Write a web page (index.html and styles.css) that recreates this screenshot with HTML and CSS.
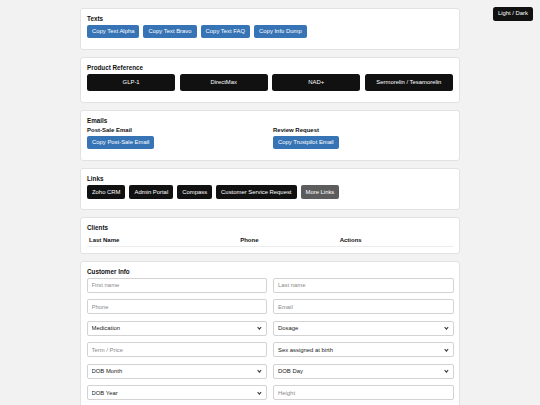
FILE: index.html
```html
<!DOCTYPE html>
<html lang="en">
<head>
<meta charset="utf-8">
<title>Dashboard</title>
<link rel="stylesheet" href="styles.css">
</head>
<body>
<button class="theme-toggle">Light / Dark</button>
<main class="container">
  <section class="card">
    <h2 class="card-title">Texts</h2>
    <div class="btn-row">
      <button class="btn btn-blue">Copy Text Alpha</button>
      <button class="btn btn-blue">Copy Text Bravo</button>
      <button class="btn btn-blue">Copy Text FAQ</button>
      <button class="btn btn-blue">Copy Info Dump</button>
    </div>
  </section>

  <section class="card">
    <h2 class="card-title">Product Reference</h2>
    <div class="product-grid">
      <button class="btn btn-dark btn-product">GLP-1</button>
      <button class="btn btn-dark btn-product">DirectMax</button>
      <button class="btn btn-dark btn-product">NAD+</button>
      <button class="btn btn-dark btn-product">Sermorelin / Tesamorelin</button>
    </div>
  </section>

  <section class="card">
    <h2 class="card-title">Emails</h2>
    <div class="two-col">
      <div class="email-block">
        <h3 class="sub-title">Post-Sale Email</h3>
        <button class="btn btn-blue">Copy Post-Sale Email</button>
      </div>
      <div class="email-block">
        <h3 class="sub-title">Review Request</h3>
        <button class="btn btn-blue">Copy Trustpilot Email</button>
      </div>
    </div>
  </section>

  <section class="card">
    <h2 class="card-title">Links</h2>
    <div class="btn-row">
      <button class="btn btn-dark btn-link">Zoho CRM</button>
      <button class="btn btn-dark btn-link">Admin Portal</button>
      <button class="btn btn-dark btn-link">Compass</button>
      <button class="btn btn-dark btn-link">Customer Service Request</button>
      <button class="btn btn-gray btn-link">More Links</button>
    </div>
  </section>

  <section class="card card-table">
    <h2 class="card-title">Clients</h2>
    <table class="clients">
      <thead>
        <tr>
          <th class="col-name">Last Name</th>
          <th class="col-phone">Phone</th>
          <th class="col-actions">Actions</th>
        </tr>
      </thead>
      <tbody></tbody>
    </table>
  </section>

  <section class="card">
    <h2 class="card-title">Customer Info</h2>
    <div class="form-grid">
      <input class="field" type="text" placeholder="First name">
      <input class="field" type="text" placeholder="Last name">
      <input class="field" type="text" placeholder="Phone">
      <input class="field" type="text" placeholder="Email">
      <div class="select-wrap">
        <select class="field select"><option>Medication</option></select>
      </div>
      <div class="select-wrap">
        <select class="field select"><option>Dosage</option></select>
      </div>
      <input class="field" type="text" placeholder="Term / Price">
      <div class="select-wrap">
        <select class="field select"><option>Sex assigned at birth</option></select>
      </div>
      <div class="select-wrap">
        <select class="field select"><option>DOB Month</option></select>
      </div>
      <div class="select-wrap">
        <select class="field select"><option>DOB Day</option></select>
      </div>
      <div class="select-wrap">
        <select class="field select"><option>DOB Year</option></select>
      </div>
      <input class="field" type="text" placeholder="Height">
    </div>
  </section>
</main>
</body>
</html>
```

FILE: styles.css
```css
* {
  box-sizing: border-box;
}

html,
body {
  margin: 0;
  padding: 0;
  overflow: hidden;
}

body {
  background: #f2f2f2;
  font-family: "Liberation Sans", Arial, sans-serif;
  color: #151515;
  height: 405px;
}

.theme-toggle {
  position: fixed;
  top: 7px;
  right: 7px;
  height: 13.5px;
  padding: 0 5px;
  border: none;
  border-radius: 2.5px;
  background: #111;
  color: #fff;
  font-family: inherit;
  font-size: 5.9px;
  line-height: 13.5px;
}

.container {
  width: 380px;
  margin: 8px auto 0;
  display: flex;
  flex-direction: column;
  gap: 7px;
}

.card {
  background: #fff;
  border: 1px solid #e2e2e2;
  border-radius: 3px;
  padding: 6px 6px 10.5px;
}

.card-table {
  padding-bottom: 6px;
}

.card-title {
  margin: 0 0 3px;
  font-size: 6.3px;
  line-height: 7px;
  font-weight: bold;
  color: #111;
}

.sub-title {
  margin: 0 0 2.5px;
  font-size: 6px;
  line-height: 7px;
  font-weight: bold;
  color: #111;
}

.btn-row {
  display: flex;
  gap: 4px;
}

.btn {
  display: block;
  height: 13px;
  padding: 0 5px;
  border: none;
  border-radius: 2px;
  font-family: inherit;
  font-size: 5.9px;
  line-height: 13px;
  color: #fff;
  white-space: nowrap;
}

.btn-blue {
  background: #3674b5;
}

.btn-dark {
  background: #111;
}

.btn-gray {
  background: #5c5c5c;
}

.btn-link {
  height: 14px;
  line-height: 14px;
}

.product-grid {
  display: grid;
  grid-template-columns: repeat(4, 1fr);
  gap: 4.3px;
}

.btn-product {
  height: 17.5px;
  line-height: 17.5px;
  border-radius: 2.5px;
}

.two-col {
  display: grid;
  grid-template-columns: 1fr 1fr;
  gap: 6px;
}

.email-block {
  display: flex;
  flex-direction: column;
  align-items: flex-start;
}

.clients {
  width: 100%;
  margin-top: 3px;
  border-collapse: collapse;
  table-layout: fixed;
}

.clients th {
  text-align: left;
  font-size: 6px;
  line-height: 7px;
  font-weight: bold;
  color: #111;
  padding: 2.5px 2px 2px;
  border-bottom: 1px solid #ececec;
}

.col-name {
  width: 41.3%;
}

.col-phone {
  width: 27.2%;
}

.form-grid {
  display: grid;
  grid-template-columns: 1fr 1fr;
  column-gap: 6px;
  row-gap: 6.5px;
  margin-left: -0.5px;
  margin-right: -0.5px;
}

.field {
  display: block;
  width: 100%;
  height: 15px;
  margin: 0;
  padding: 0 4px;
  border: 1px solid #d3d3d3;
  border-radius: 2px;
  background: #fff;
  font-family: inherit;
  font-size: 5.9px;
  color: #222;
  outline: none;
}

.field::placeholder {
  color: #8a8a8a;
}

.select {
  appearance: none;
  -webkit-appearance: none;
  color: #222;
}

.select-wrap {
  position: relative;
  font-size: 0;
}

.select-wrap::after {
  content: "";
  position: absolute;
  right: 6px;
  top: 5.5px;
  width: 1.8px;
  height: 1.8px;
  border-right: 0.8px solid #333;
  border-bottom: 0.8px solid #333;
  transform: rotate(45deg);
  pointer-events: none;
}
```
